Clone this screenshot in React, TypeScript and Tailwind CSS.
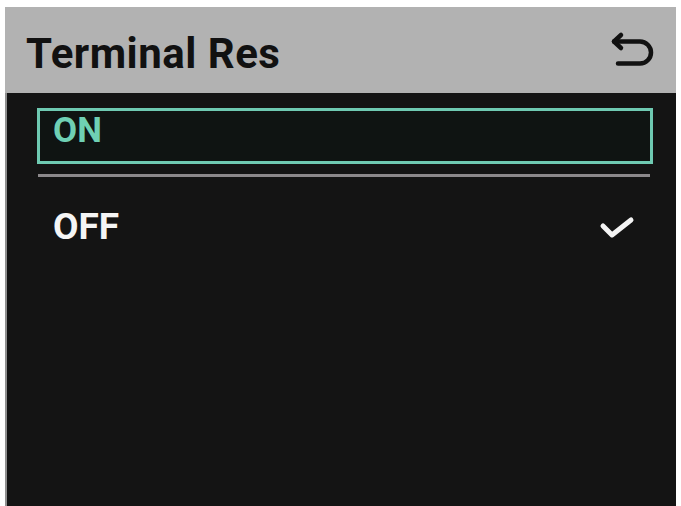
import React from 'react';

const BackIcon: React.FC = () => (
  <svg width="48" height="40" viewBox="0 0 48 40" fill="none" stroke="#111" strokeWidth="4.5" strokeLinecap="round" strokeLinejoin="round">
    <path d="M13 7 L6 13.5 L13 20" />
    <path d="M6 13.5 H32 A11 11 0 0 1 32 35.5 H10" />
  </svg>
);

const CheckIcon: React.FC = () => (
  <svg width="36" height="24" viewBox="0 0 36 24" fill="none" stroke="#f4f4f4" strokeWidth="5" strokeLinecap="round" strokeLinejoin="round">
    <path d="M4 11 L13 20 L32 5" />
  </svg>
);

const App: React.FC = () => {
  return (
    <div className="w-[681px] h-[506px] bg-white pt-[7px] px-[5px] overflow-hidden" style={{ fontFamily: 'Roboto, "Liberation Sans", sans-serif' }}>
      <div className="flex flex-col h-full">
        {/* Title bar */}
        <header className="h-[86px] bg-[#b2b2b2] flex items-start justify-between pl-[21px] pr-[20px] flex-shrink-0">
          <h1 className="mt-[26px] text-[42px] leading-none font-bold text-[#111] tracking-[0.5px]">Terminal Res</h1>
          <div className="mt-[21px]">
            <BackIcon />
          </div>
        </header>

        {/* Option list */}
        <div className="flex-1 bg-[#141414] border-l-2 border-[#8f8f8f]">
          <div className="ml-[30px] mt-[15px] w-[616px] h-[56px] border-[3px] border-[#6fcab2] bg-[#0f1412] flex items-start pl-[13px] pt-[2px]">
            <span className="text-[35px] leading-none font-bold text-[#6fd0b4]">ON</span>
          </div>
          <div className="ml-[31px] mt-[10px] w-[612px] h-[3px] bg-[#8c888b]" />
          <div className="mt-[31px] flex items-center justify-between pl-[46px] pr-[41px]">
            <span className="text-[37px] leading-none font-bold text-[#f5f5f5]">OFF</span>
            <CheckIcon />
          </div>
        </div>
      </div>
    </div>
  );
};

export default App;
